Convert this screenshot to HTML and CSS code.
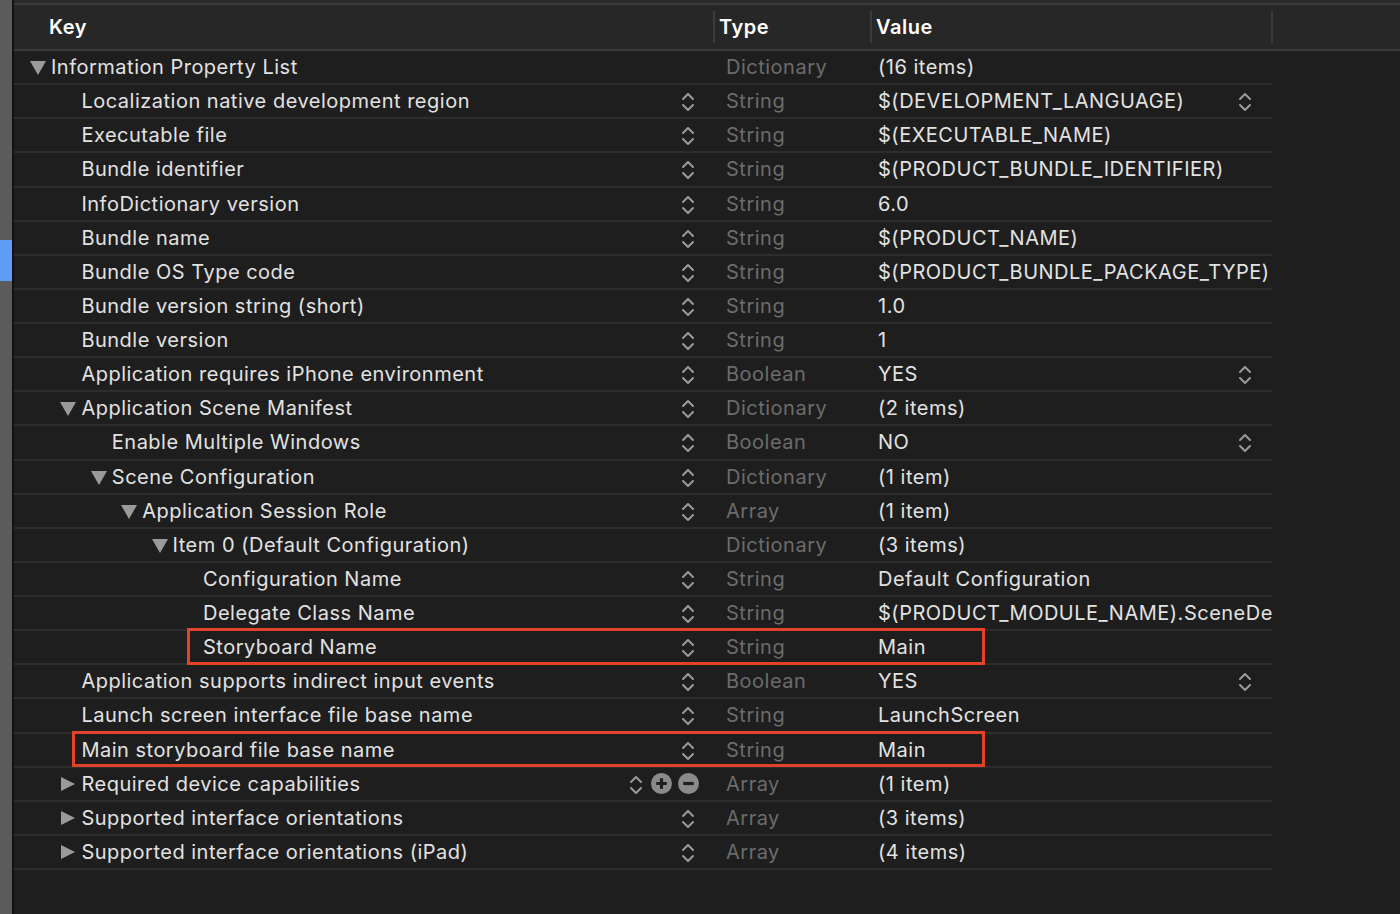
FILE: index.html
```html
<!DOCTYPE html>
<html>
<head>
<meta charset="utf-8">
<link rel="stylesheet" href="styles.css">
</head>
<body>
<div class="app">
  <div class="sidebar"><div class="sel"></div></div>
  <div class="main">
    <div class="topline"></div>
    <div class="header">
      <div class="h h-key">Key</div>
      <div class="h h-type">Type</div>
      <div class="h h-value">Value</div>
      <div class="h h-rest"></div>
    </div>
    <div class="rows">
      <div class="row"><div class="key l0"><span class="tri down"></span><span class="name">Information Property List</span></div><div class="type">Dictionary</div><div class="value">(16 items)</div></div>
      <div class="row"><div class="key l1"><span class="tri"></span><span class="name">Localization native development region</span><svg class="step" viewBox="0 0 14 20"><path d="M2 7 L7 2 L12 7 M2 13 L7 18 L12 13"/></svg></div><div class="type">String</div><div class="value"><span class="vtext">$(DEVELOPMENT_LANGUAGE)</span><svg class="step" viewBox="0 0 14 20"><path d="M2 7 L7 2 L12 7 M2 13 L7 18 L12 13"/></svg></div></div>
      <div class="row"><div class="key l1"><span class="tri"></span><span class="name">Executable file</span><svg class="step" viewBox="0 0 14 20"><path d="M2 7 L7 2 L12 7 M2 13 L7 18 L12 13"/></svg></div><div class="type">String</div><div class="value">$(EXECUTABLE_NAME)</div></div>
      <div class="row"><div class="key l1"><span class="tri"></span><span class="name">Bundle identifier</span><svg class="step" viewBox="0 0 14 20"><path d="M2 7 L7 2 L12 7 M2 13 L7 18 L12 13"/></svg></div><div class="type">String</div><div class="value">$(PRODUCT_BUNDLE_IDENTIFIER)</div></div>
      <div class="row"><div class="key l1"><span class="tri"></span><span class="name">InfoDictionary version</span><svg class="step" viewBox="0 0 14 20"><path d="M2 7 L7 2 L12 7 M2 13 L7 18 L12 13"/></svg></div><div class="type">String</div><div class="value">6.0</div></div>
      <div class="row"><div class="key l1"><span class="tri"></span><span class="name">Bundle name</span><svg class="step" viewBox="0 0 14 20"><path d="M2 7 L7 2 L12 7 M2 13 L7 18 L12 13"/></svg></div><div class="type">String</div><div class="value">$(PRODUCT_NAME)</div></div>
      <div class="row"><div class="key l1"><span class="tri"></span><span class="name">Bundle OS Type code</span><svg class="step" viewBox="0 0 14 20"><path d="M2 7 L7 2 L12 7 M2 13 L7 18 L12 13"/></svg></div><div class="type">String</div><div class="value">$(PRODUCT_BUNDLE_PACKAGE_TYPE)</div></div>
      <div class="row"><div class="key l1"><span class="tri"></span><span class="name">Bundle version string (short)</span><svg class="step" viewBox="0 0 14 20"><path d="M2 7 L7 2 L12 7 M2 13 L7 18 L12 13"/></svg></div><div class="type">String</div><div class="value">1.0</div></div>
      <div class="row"><div class="key l1"><span class="tri"></span><span class="name">Bundle version</span><svg class="step" viewBox="0 0 14 20"><path d="M2 7 L7 2 L12 7 M2 13 L7 18 L12 13"/></svg></div><div class="type">String</div><div class="value">1</div></div>
      <div class="row"><div class="key l1"><span class="tri"></span><span class="name">Application requires iPhone environment</span><svg class="step" viewBox="0 0 14 20"><path d="M2 7 L7 2 L12 7 M2 13 L7 18 L12 13"/></svg></div><div class="type">Boolean</div><div class="value"><span class="vtext">YES</span><svg class="step" viewBox="0 0 14 20"><path d="M2 7 L7 2 L12 7 M2 13 L7 18 L12 13"/></svg></div></div>
      <div class="row"><div class="key l1"><span class="tri down"></span><span class="name">Application Scene Manifest</span><svg class="step" viewBox="0 0 14 20"><path d="M2 7 L7 2 L12 7 M2 13 L7 18 L12 13"/></svg></div><div class="type">Dictionary</div><div class="value">(2 items)</div></div>
      <div class="row"><div class="key l2"><span class="tri"></span><span class="name">Enable Multiple Windows</span><svg class="step" viewBox="0 0 14 20"><path d="M2 7 L7 2 L12 7 M2 13 L7 18 L12 13"/></svg></div><div class="type">Boolean</div><div class="value"><span class="vtext">NO</span><svg class="step" viewBox="0 0 14 20"><path d="M2 7 L7 2 L12 7 M2 13 L7 18 L12 13"/></svg></div></div>
      <div class="row"><div class="key l2"><span class="tri down"></span><span class="name">Scene Configuration</span><svg class="step" viewBox="0 0 14 20"><path d="M2 7 L7 2 L12 7 M2 13 L7 18 L12 13"/></svg></div><div class="type">Dictionary</div><div class="value">(1 item)</div></div>
      <div class="row"><div class="key l3"><span class="tri down"></span><span class="name">Application Session Role</span><svg class="step" viewBox="0 0 14 20"><path d="M2 7 L7 2 L12 7 M2 13 L7 18 L12 13"/></svg></div><div class="type">Array</div><div class="value">(1 item)</div></div>
      <div class="row"><div class="key l4"><span class="tri down"></span><span class="name">Item 0 (Default Configuration)</span></div><div class="type">Dictionary</div><div class="value">(3 items)</div></div>
      <div class="row"><div class="key l5"><span class="tri"></span><span class="name">Configuration Name</span><svg class="step" viewBox="0 0 14 20"><path d="M2 7 L7 2 L12 7 M2 13 L7 18 L12 13"/></svg></div><div class="type">String</div><div class="value">Default Configuration</div></div>
      <div class="row"><div class="key l5"><span class="tri"></span><span class="name">Delegate Class Name</span><svg class="step" viewBox="0 0 14 20"><path d="M2 7 L7 2 L12 7 M2 13 L7 18 L12 13"/></svg></div><div class="type">String</div><div class="value clip">$(PRODUCT_MODULE_NAME).SceneDelegate</div></div>
      <div class="row"><div class="key l5"><span class="tri"></span><span class="name">Storyboard Name</span><svg class="step" viewBox="0 0 14 20"><path d="M2 7 L7 2 L12 7 M2 13 L7 18 L12 13"/></svg></div><div class="type">String</div><div class="value">Main</div><div class="mark mark1"></div></div>
      <div class="row"><div class="key l1"><span class="tri"></span><span class="name">Application supports indirect input events</span><svg class="step" viewBox="0 0 14 20"><path d="M2 7 L7 2 L12 7 M2 13 L7 18 L12 13"/></svg></div><div class="type">Boolean</div><div class="value"><span class="vtext">YES</span><svg class="step" viewBox="0 0 14 20"><path d="M2 7 L7 2 L12 7 M2 13 L7 18 L12 13"/></svg></div></div>
      <div class="row"><div class="key l1"><span class="tri"></span><span class="name">Launch screen interface file base name</span><svg class="step" viewBox="0 0 14 20"><path d="M2 7 L7 2 L12 7 M2 13 L7 18 L12 13"/></svg></div><div class="type">String</div><div class="value">LaunchScreen</div></div>
      <div class="row"><div class="key l1"><span class="tri"></span><span class="name">Main storyboard file base name</span><svg class="step" viewBox="0 0 14 20"><path d="M2 7 L7 2 L12 7 M2 13 L7 18 L12 13"/></svg></div><div class="type">String</div><div class="value">Main</div><div class="mark mark2"></div></div>
      <div class="row"><div class="key l1"><span class="tri right"></span><span class="name">Required device capabilities</span><svg class="step step-l" viewBox="0 0 14 20"><path d="M2 7 L7 2 L12 7 M2 13 L7 18 L12 13"/></svg><svg class="circ" viewBox="0 0 20 20"><circle cx="10" cy="10" r="10"/><path d="M5 10 H15 M10 5 V15"/></svg><svg class="circ" viewBox="0 0 20 20"><circle cx="10" cy="10" r="10"/><path d="M5 10 H15"/></svg></div><div class="type">Array</div><div class="value">(1 item)</div></div>
      <div class="row"><div class="key l1"><span class="tri right"></span><span class="name">Supported interface orientations</span><svg class="step" viewBox="0 0 14 20"><path d="M2 7 L7 2 L12 7 M2 13 L7 18 L12 13"/></svg></div><div class="type">Array</div><div class="value">(3 items)</div></div>
      <div class="row"><div class="key l1"><span class="tri right"></span><span class="name">Supported interface orientations (iPad)</span><svg class="step" viewBox="0 0 14 20"><path d="M2 7 L7 2 L12 7 M2 13 L7 18 L12 13"/></svg></div><div class="type">Array</div><div class="value">(4 items)</div></div>
    </div>
  </div>
</div>
</body>
</html>
```

FILE: styles.css
```css
* { box-sizing: border-box; }
html, body { margin: 0; padding: 0; }
body {
  width: 1400px;
  height: 914px;
  overflow: hidden;
  background: #1e1e1e;
  font-family: Inter, "Noto Sans", sans-serif;
  font-size: 20px;
  letter-spacing: 0.5px;
  color: #e2e2e2;
}
.app { display: flex; height: 914px; }
.sidebar {
  width: 14px;
  flex: none;
  background: #5b5b5b;
  border-right: 2px solid #111;
  padding-top: 240px;
}
.sel { height: 41px; background: #5f9cf6; }
.main { flex: 1; display: flex; flex-direction: column; }
.topline { height: 5px; background: #2a2a2a; border-bottom: 2px solid #3a3a3a; }
.header {
  height: 46px;
  display: grid;
  grid-template-columns: 699px 157px 401px 1fr;
  background: #272727;
  border-bottom: 2px solid #3a3a3a;
  align-items: center;
}
.h {
  color: #fff;
  font-weight: 600;
  height: 32px;
  line-height: 32px;
}
.h-key { padding-left: 35px; }
.h-type { border-left: 2px solid #3b3b3b; padding-left: 4px; }
.h-value { border-left: 2px solid #3b3b3b; padding-left: 4px; }
.h-rest { border-left: 2px solid #3b3b3b; }
.rows { width: 1258px; }
.row {
  position: relative;
  height: 34.13px;
  display: grid;
  grid-template-columns: 699px 157px 402px;
  border-bottom: 2px solid #2d2d2d;
  align-items: center;
}
.key { display: flex; align-items: center; height: 100%; padding-right: 18px; }
.l0 { padding-left: 0; }
.l1 { padding-left: 30.4px; }
.l2 { padding-left: 60.8px; }
.l3 { padding-left: 91.2px; }
.l4 { padding-left: 121.6px; }
.l5 { padding-left: 152px; }
.tri { width: 37px; flex: none; height: 16px; position: relative; }
.tri.down::before {
  content: "";
  position: absolute;
  right: 5px; top: 2px;
  border-left: 8px solid transparent;
  border-right: 8px solid transparent;
  border-top: 14px solid #9a9a9a;
}
.tri.right::before {
  content: "";
  position: absolute;
  right: 6px; top: 1px;
  border-top: 7.5px solid transparent;
  border-bottom: 7.5px solid transparent;
  border-left: 14px solid #9a9a9a;
}
.name { flex: 1; white-space: nowrap; }
.step { width: 14px; height: 20px; flex: none; margin-top: 2px; }
.step path { fill: none; stroke: #9a9a9a; stroke-width: 2; stroke-linecap: round; stroke-linejoin: round; }
.step-l { margin-right: 8px; }
.circ { width: 21px; height: 21px; flex: none; margin-right: 6px; }
.circ circle { fill: #8a8a8a; }
.circ path { stroke: #1e1e1e; stroke-width: 3; }
.circ:last-child { margin-right: -4px; }
.type { color: #6c6c6c; padding-left: 13px; }
.value { padding-left: 8px; display: flex; align-items: center; white-space: nowrap; overflow: hidden; padding-right: 20px; }
.value.clip { padding-right: 0; }
.vtext { flex: 1; }
.mark {
  position: absolute;
  border: 3px solid #e5422c;
  pointer-events: none;
}
.mark1 { left: 173px; top: -3px; width: 798px; height: 37px; }
.mark2 { left: 58px; top: -3px; width: 913px; height: 36px; }
```
